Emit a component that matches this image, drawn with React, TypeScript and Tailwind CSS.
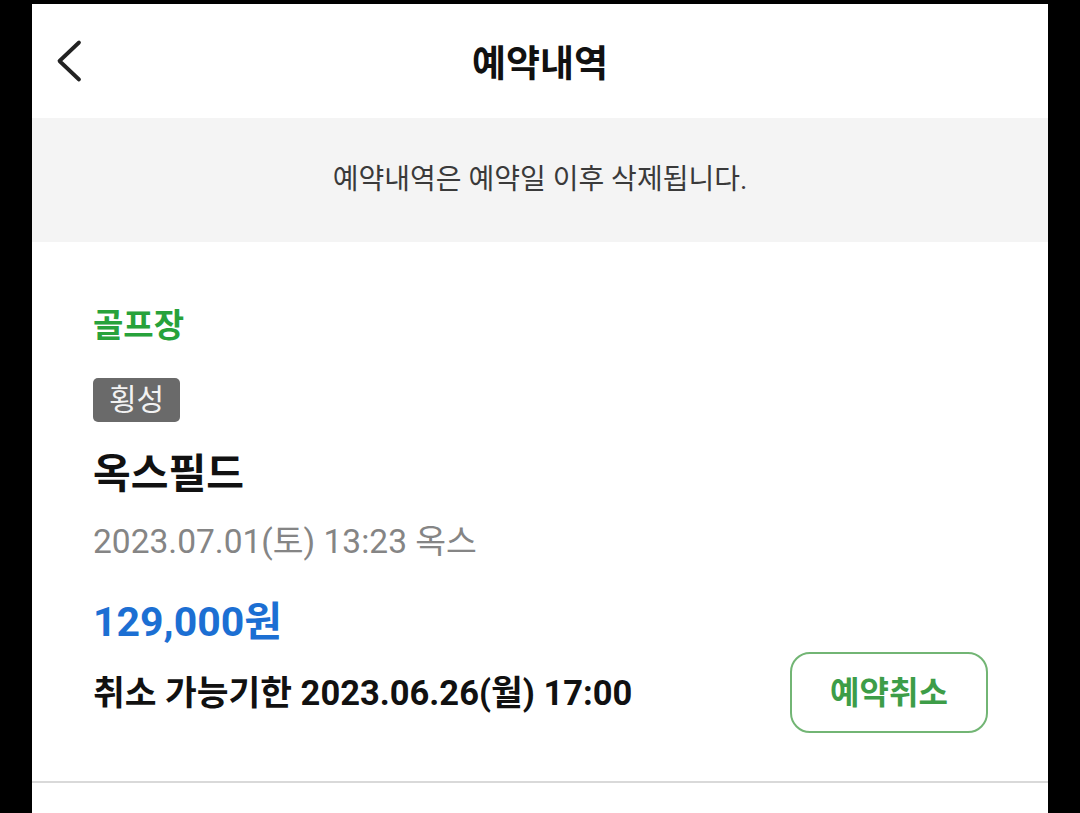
import React from "react";

export default function App() {
  return (
    <div className="w-[1080px] h-[813px] bg-black pt-[4px] px-[32px] overflow-hidden [font-family:Roboto,'Noto_Sans_CJK_KR',sans-serif]">
      <div className="bg-white h-full flex flex-col">
        {/* Header */}
        <div className="h-[114px] grid grid-cols-[1fr_auto_1fr] items-center">
          <div className="pl-[24px] flex items-center">
            <svg width="26" height="44" viewBox="0 0 26 44" fill="none">
              <polyline
                points="23,3.5 3.5,22 23,40.5"
                stroke="#222222"
                strokeWidth="3.8"
                strokeLinecap="round"
                strokeLinejoin="round"
              />
            </svg>
          </div>
          <div className="text-[37px] leading-[44px] font-bold text-[#111111] [font-family:'Noto_Sans_CJK_KR',sans-serif]">
            예약내역
          </div>
          <div />
        </div>

        {/* Notice band */}
        <div className="h-[124px] bg-[#f4f4f4] flex items-center justify-center">
          <span className="text-[28px] leading-[36px] text-[#3a3a3a]">
            예약내역은 예약일 이후 삭제됩니다.
          </span>
        </div>

        {/* Reservation card */}
        <div className="pl-[61px] pr-[60px] pt-[64px] pb-[48px] border-b-2 border-[#d9d9d9] flex flex-col items-start">
          <div className="text-[33px] leading-[40px] font-bold text-[#27a23b]">골프장</div>
          <div className="mt-[32px] h-[44px] px-[16px] rounded-[5px] bg-[#6a6a6a] flex items-center">
            <span className="text-[30px] leading-[36px] text-[#f2f2f2]">횡성</span>
          </div>
          <div className="mt-[28px] text-[41px] leading-[48px] font-bold text-[#111111]">옥스필드</div>
          <div className="mt-[24px] text-[33.5px] leading-[40px] text-[#858585]">
            2023.07.01(토) 13:23 옥스
          </div>
          <div className="mt-[36px] text-[41px] leading-[48px] font-bold text-[#1c6fd3]">129,000원</div>
          <div className="mt-[6px] w-full flex items-center justify-between">
            <div className="text-[34.5px] leading-[44px] font-bold text-[#111111]">
              취소 가능기한 2023.06.26(월) 17:00
            </div>
            <button className="w-[198px] h-[81px] rounded-[20px] border-2 border-[#72b574] bg-white flex items-center justify-center">
              <span className="text-[32px] leading-[40px] font-bold text-[#3d9d48]">예약취소</span>
            </button>
          </div>
        </div>
        <div className="flex-1 bg-white" />
      </div>
    </div>
  );
}
